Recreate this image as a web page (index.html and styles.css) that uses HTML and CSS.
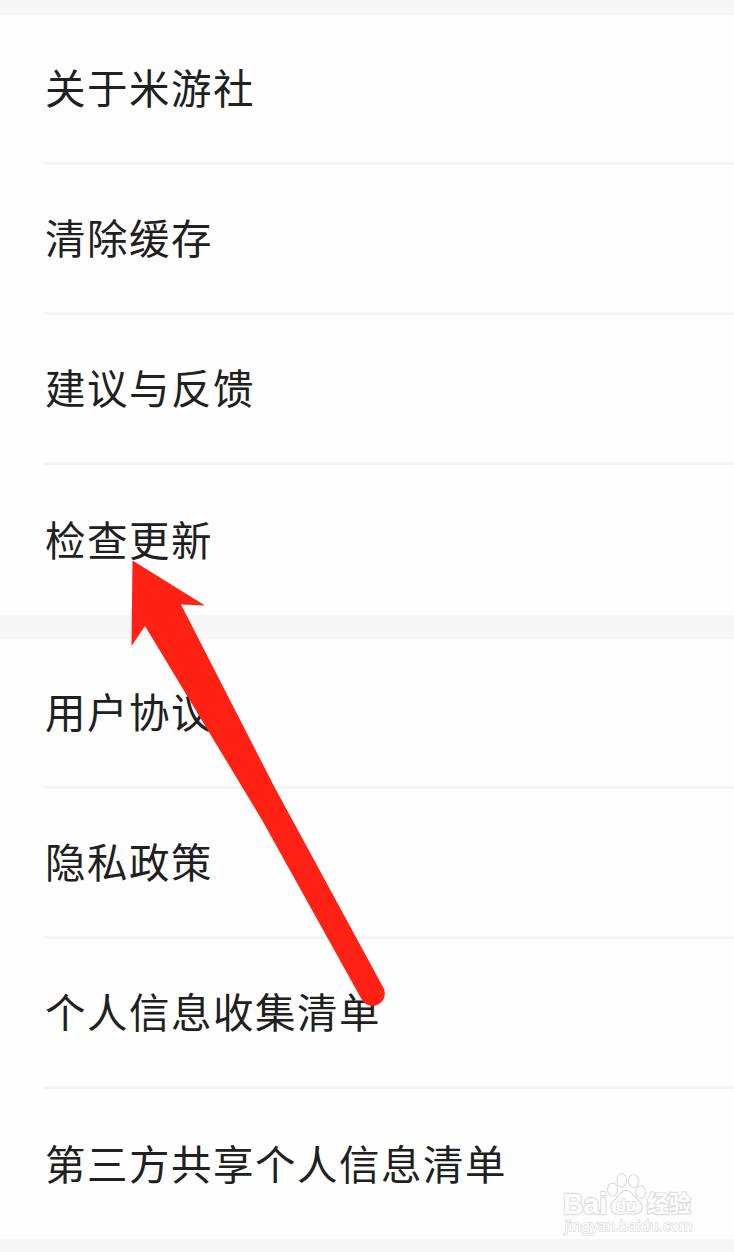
FILE: index.html
```html
<!DOCTYPE html>
<html lang="zh-CN">
<head>
<meta charset="utf-8">
<title>设置</title>
<link rel="stylesheet" href="styles.css">
</head>
<body>
<main class="page">
  <ul class="group">
    <li class="row"><span class="label">关于米游社</span></li>
    <li class="row"><span class="label">清除缓存</span></li>
    <li class="row"><span class="label">建议与反馈</span></li>
    <li class="row"><span class="label">检查更新</span></li>
  </ul>
  <ul class="group">
    <li class="row"><span class="label">用户协议</span></li>
    <li class="row"><span class="label">隐私政策</span></li>
    <li class="row"><span class="label">个人信息收集清单</span></li>
    <li class="row"><span class="label">第三方共享个人信息清单</span></li>
  </ul>
  <svg class="arrow" viewBox="0 0 734 1252" aria-hidden="true">
    <path d="M132.5 560.5L205 605.5L181 604.5L275 788L383 987A12.2 12.2 0 0 1 362 1000L262 820L145 626L131.5 646Z"/>
  </svg>
  <svg class="watermark" viewBox="0 0 194 92">
    <g class="outline">
      <ellipse cx="72.500" cy="29.500" rx="5" ry="6.500"/>
      <ellipse cx="81.700" cy="20.300" rx="4.800" ry="6.800"/>
      <ellipse cx="93.500" cy="21" rx="5" ry="6.500"/>
      <ellipse cx="100.500" cy="32" rx="5" ry="6.300"/>
      <path d="M86 30.500C80 30.500 79 36 74.500 40C70 44 69.500 49 73 52.500C76 55.500 81 54 86 54C91 54 97 55.500 100.500 52C104 48.500 102 43.500 98 40C94 36.500 92 30.500 86 30.500Z"/>
      <text class="brand" x="23" y="53.500" textLength="44" lengthAdjust="spacingAndGlyphs">Bai</text>
      <text class="du" x="76" y="51" textLength="20" lengthAdjust="spacingAndGlyphs">du</text>
      <text class="cn" x="107" y="52" textLength="44" lengthAdjust="spacingAndGlyphs">经验</text>
      <text class="url" x="24.500" y="71" textLength="128" lengthAdjust="spacingAndGlyphs">jingyan.baidu.com</text>
    </g>
  </svg>
</main>
</body>
</html>
```
FILE: styles.css
```css
body {
  margin: 0;
  background: #f7f7f7;
  font-family: "Noto Sans CJK SC", sans-serif;
}

.page {
  position: relative;
  box-sizing: border-box;
  height: 1252px;
  padding-top: 15px;
  overflow: hidden;
}

.group {
  margin: 0 0 24px;
  padding: 0 0 0 44px;
  list-style: none;
  background: #fefefe;
}

.row {
  display: flex;
  align-items: center;
  box-sizing: border-box;
  height: 150px;
  border-bottom: 3px solid #f5f5f5;
}

.row:last-child {
  padding-top: 1px;
  border-bottom: 0;
}

.label {
  padding: 0 0 4px 1px;
  color: #202020;
  font-size: 40.5px;
  line-height: 60px;
  letter-spacing: 1.5px;
  white-space: nowrap;
}

.arrow {
  position: absolute;
  inset: 0;
  width: 734px;
  height: 1252px;
  fill: #ff2114;
}

.watermark {
  position: absolute;
  left: 540px;
  top: 1160px;
  width: 194px;
  height: 92px;
}

.outline {
  fill: #fefefe;
  stroke: #dedede;
  stroke-width: 1.2;
}

.outline text {
  paint-order: stroke;
  stroke-width: 2.4;
}

.brand {
  font: bold 29px "Liberation Sans", sans-serif;
}

.outline .du {
  font: bold 17px "Liberation Sans", sans-serif;
  stroke-width: 1.8;
}

.cn {
  font: bold 22.5px "Noto Sans CJK SC", sans-serif;
}

.outline .url {
  font: 14px "Noto Sans", sans-serif;
  stroke-width: 1.4;
}
```
